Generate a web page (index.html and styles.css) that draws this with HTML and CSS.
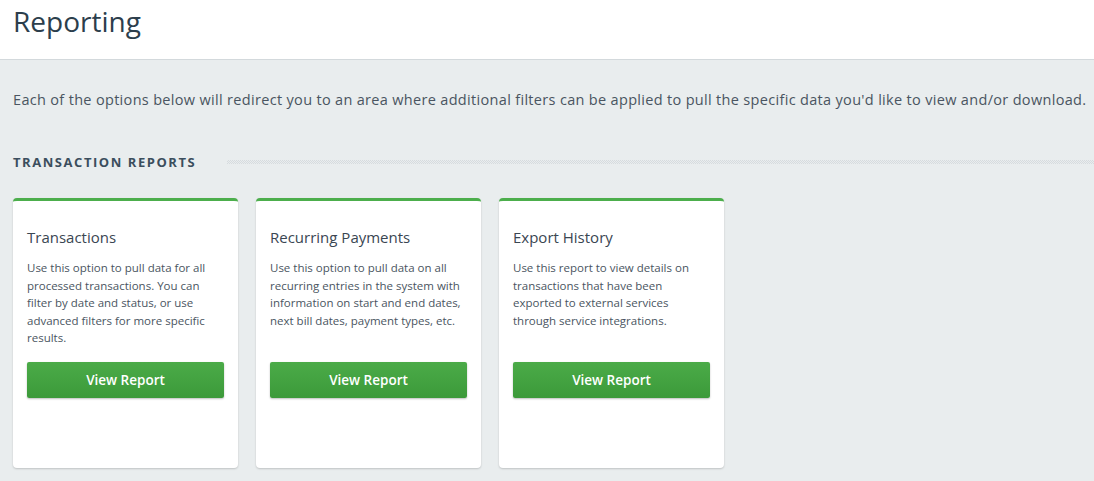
FILE: index.html
```html
<!DOCTYPE html>
<html>
<head>
<meta charset="utf-8">
<link rel="stylesheet" href="styles.css">
</head>
<body>
<header class="page-header">
  <h1 class="page-title">Reporting</h1>
</header>
<main class="content">
  <p class="intro">Each of the options below will redirect you to an area where additional filters can be applied to pull the specific data you'd like to view and/or download.</p>
  <div class="section-head">
    <h2 class="section-title">TRANSACTION REPORTS</h2>
    <div class="section-rule"></div>
  </div>
  <div class="cards">
    <div class="card">
      <h3 class="card-title">Transactions</h3>
      <p class="card-text">Use this option to pull data for all processed transactions. You can filter by date and status, or use advanced filters for more specific results.</p>
      <button class="btn">View Report</button>
    </div>
    <div class="card">
      <h3 class="card-title">Recurring Payments</h3>
      <p class="card-text">Use this option to pull data on all recurring entries in the system with information on start and end dates, next bill dates, payment types, etc.</p>
      <button class="btn">View Report</button>
    </div>
    <div class="card">
      <h3 class="card-title">Export History</h3>
      <p class="card-text">Use this report to view details on transactions that have been exported to external services through service integrations.</p>
      <button class="btn">View Report</button>
    </div>
  </div>
</main>
</body>
</html>
```
FILE: styles.css
```css
* { box-sizing: border-box; }
html, body { margin: 0; padding: 0; }
body {
  background: #e9edee;
  font-family: "Open Sans", "Noto Sans", sans-serif;
  color: #3f4a55;
  width: 1094px;
  height: 481px;
  overflow: hidden;
}
.page-header {
  background: #fff;
  height: 60px;
  border-bottom: 1px solid #d3d9dc;
  padding: 0 13px;
}
.page-title {
  margin: 0;
  font-weight: 400;
  font-size: 28px;
  line-height: 42px;
  color: #2c3e4c;
}
.content { padding: 0 13px; }
.intro {
  margin: 0;
  padding-top: 30px;
  font-size: 14.5px;
  letter-spacing: 0.32px;
  line-height: 20px;
  color: #4a5561;
  white-space: nowrap;
}
.section-head {
  display: flex;
  align-items: center;
  margin-top: 42px;
  height: 20px;
}
.section-title {
  margin: 0;
  font-size: 13px;
  font-weight: 700;
  letter-spacing: 1.55px;
  color: #3b4e5d;
  white-space: nowrap;
}
.section-rule {
  flex: 1;
  margin-left: 31px;
  margin-right: -13px;
  height: 4px;
  background-image:
    linear-gradient(45deg, #d6dbde 25%, transparent 25%, transparent 75%, #d6dbde 75%),
    linear-gradient(45deg, #d6dbde 25%, transparent 25%, transparent 75%, #d6dbde 75%);
  background-size: 2px 2px;
  background-position: 0 0, 1px 1px;
}
.cards {
  display: flex;
  gap: 18px;
  margin-top: 26px;
}
.card {
  width: 225px;
  height: 270px;
  background: #fff;
  border-top: 3px solid #4cae4c;
  border-radius: 4px;
  box-shadow: 0 1px 2px rgba(0,0,0,0.18);
  padding: 26px 14px 0 14px;
}
.card-title {
  margin: 0;
  font-size: 15px;
  font-weight: 400;
  line-height: 20px;
  color: #3a4652;
}
.card-text {
  margin: 12px 0 0 0;
  font-size: 11.5px;
  line-height: 17.5px;
  color: #4a5561;
  height: 88px;
}
.btn {
  display: block;
  width: 100%;
  height: 36px;
  margin-top: 15px;
  border: none;
  border-radius: 2px;
  background: linear-gradient(#4bab48, #3c9a3a);
  box-shadow: 0 1px 2px rgba(0,0,0,0.25);
  color: #fff;
  font-family: inherit;
  font-size: 13.5px;
  font-weight: 600;
}
```
